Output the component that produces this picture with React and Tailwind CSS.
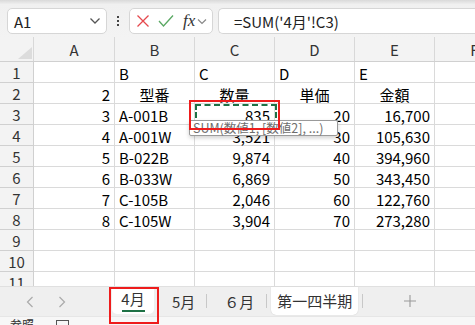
import React from "react";

const W = [81, 80, 80, 80, 80, 80];

const data = [
  [["", "l"], ["B", "l"], ["C", "l"], ["D", "l"], ["E", "l"], ["", "l"]],
  [["2", "r"], ["型番", "c"], ["数量", "c"], ["単価", "c"], ["金額", "c"], ["", "l"]],
  [["3", "r"], ["A-001B", "l"], ["835", "r"], ["20", "r"], ["16,700", "r"], ["", "l"]],
  [["4", "r"], ["A-001W", "l"], ["3,521", "r"], ["30", "r"], ["105,630", "r"], ["", "l"]],
  [["5", "r"], ["B-022B", "l"], ["9,874", "r"], ["40", "r"], ["394,960", "r"], ["", "l"]],
  [["6", "r"], ["B-033W", "l"], ["6,869", "r"], ["50", "r"], ["343,450", "r"], ["", "l"]],
  [["7", "r"], ["C-105B", "l"], ["2,046", "r"], ["60", "r"], ["122,760", "r"], ["", "l"]],
  [["8", "r"], ["C-105W", "l"], ["3,904", "r"], ["70", "r"], ["273,280", "r"], ["", "l"]],
  [["", "l"], ["", "l"], ["", "l"], ["", "l"], ["", "l"], ["", "l"]],
  [["", "l"], ["", "l"], ["", "l"], ["", "l"], ["", "l"], ["", "l"]],
  [["", "l"], ["", "l"], ["", "l"], ["", "l"], ["", "l"], ["", "l"]],
];

const alignCls = { l: "justify-start", r: "justify-end", c: "justify-center" };

function Chevron({ className }) {
  return (
    <svg width="12" height="8" viewBox="0 0 12 8" className={className}>
      <path d="M1.5 1.5 L6 6 L10.5 1.5" fill="none" stroke="#555" strokeWidth="1.3" />
    </svg>
  );
}

export default function App() {
  return (
    <div className="relative w-[475px] h-[325px] overflow-hidden bg-[#f3f3f3] text-black font-['Noto_Sans_CJK_JP','Noto_Sans',sans-serif]">
      {/* formula bar */}
      <div className="relative h-[37px] flex items-start pt-[8px] pl-[7px] gap-0 bg-gradient-to-b from-[#d9d9d9] via-[#f0f0f0] via-[12%] to-[#f3f3f3]">
        <div className="w-[100px] h-[26px] bg-white border border-[#d6d6d6] rounded-[5px] flex items-center pl-[6px] pr-[5px] justify-between">
          <span className="text-[15px] leading-none text-[#222]">A1</span>
          <Chevron />
        </div>
        <div className="w-[22px] h-[26px] flex flex-col items-center justify-center gap-[2px]">
          <span className="w-[2px] h-[2px] bg-[#444]" />
          <span className="w-[2px] h-[2px] bg-[#444]" />
          <span className="w-[2px] h-[2px] bg-[#444]" />
        </div>
        <div className="w-[84px] h-[26px] bg-white border border-[#d6d6d6] rounded-[5px] flex items-center pl-[6px]">
          <svg width="14" height="14" viewBox="0 0 14 14">
            <path d="M1.5 1.5 L12.5 12.5 M12.5 1.5 L1.5 12.5" stroke="#e5484d" strokeWidth="1.3" fill="none" />
          </svg>
          <svg width="16" height="14" viewBox="0 0 16 14" className="ml-[8px]">
            <path d="M1 7 L5.5 12 L15 1.5" stroke="#5aa863" strokeWidth="1.3" fill="none" />
          </svg>
          <span className="ml-[9px] text-[17px] leading-none italic font-['Liberation_Serif',serif] text-[#333] -mt-[2px]">fx</span>
          <svg width="10" height="7" viewBox="0 0 10 7" className="ml-[2px]">
            <path d="M1 1.5 L5 5.5 L9 1.5" fill="none" stroke="#888" strokeWidth="1.2" />
          </svg>
        </div>
        <div className="ml-[5px] flex-1 h-[26px] bg-white border border-[#d6d6d6] border-r-0 rounded-l-[5px] flex items-center pl-[15px]">
          <span className="text-[15px] leading-none text-[#222]">=SUM('4月'!C3)</span>
        </div>
      </div>

      {/* grid */}
      <div className="h-[249px] overflow-hidden bg-white">
        <div className="flex h-[25px] bg-[#f3f3f3] border-b border-[#d0d0d0]">
          <div className="w-[34px] shrink-0 relative border-r border-[#d8d8d8]">
            <svg width="14" height="12" viewBox="0 0 14 12" className="absolute left-[18px] top-[10px]">
              <path d="M14 0 L14 12 L0 12 Z" fill="#dcdcdc" />
            </svg>
          </div>
          {["A", "B", "C", "D", "E", "F"].map((c, i) => (
            <div
              key={c}
              style={{ width: W[i] }}
              className="shrink-0 flex items-center justify-center border-r border-[#d8d8d8] text-[15px] text-[#333] pt-[2px]"
            >
              {c}
            </div>
          ))}
        </div>
        {data.map((row, r) => (
          <div key={r} className="flex h-[21px]">
            <div className="w-[34px] shrink-0 bg-[#f3f3f3] border-r border-b border-[#d0d0d0] flex items-center justify-center text-[15px] text-[#333] leading-none pt-[1px]">
              {r + 1}
            </div>
            {row.map(([t, a], i) => (
              <div
                key={i}
                style={{ width: W[i] }}
                className={`shrink-0 flex items-center ${alignCls[a]} px-[4px] border-r border-b border-[#dadada] text-[15px] leading-none pt-[2px] whitespace-nowrap`}
              >
                {t}
              </div>
            ))}
          </div>
        ))}
      </div>

      {/* sheet tabs */}
      <div className="relative h-[30px] bg-[#efefef] border-t border-[#e0e0e0] flex items-start text-[15px] text-[#333]">
        <svg width="8" height="12" viewBox="0 0 8 12" className="absolute left-[26px] top-[9px]">
          <path d="M6.5 1 L1.5 6 L6.5 11" fill="none" stroke="#aaa" strokeWidth="1.2" />
        </svg>
        <svg width="8" height="12" viewBox="0 0 8 12" className="absolute left-[58px] top-[9px]">
          <path d="M1.5 1 L6.5 6 L1.5 11" fill="none" stroke="#aaa" strokeWidth="1.2" />
        </svg>
        <div className="ml-[112px] w-[42px] h-[27px] bg-white rounded-b-[5px] flex flex-col items-center pt-[3px]">
          <span className="leading-[18px]">4月</span>
          <span className="mt-[2px] w-[23px] h-[2px] bg-[#1e7145]" />
        </div>
        <span className="ml-[18px] mt-[6px] leading-[18px]">5月</span>
        <span className="ml-[11px] mt-[7px] w-px h-[14px] bg-[#c8c8c8]" />
        <span className="ml-[17px] mt-[6px] leading-[18px]">６月</span>
        <span className="ml-[12px] mt-[7px] w-px h-[14px] bg-[#c8c8c8]" />
        <div className="ml-[4px] w-[87px] h-[28px] bg-white rounded-b-[5px] shadow-[0_0_1px_#bbb] flex items-center justify-center pb-[1px]">
          <span className="leading-[18px]">第一四半期</span>
        </div>
        <span className="ml-[4px] mt-[7px] w-px h-[14px] bg-[#c8c8c8]" />
        <svg width="12" height="12" viewBox="0 0 12 12" className="ml-[41px] mt-[8px]">
          <path d="M6 0 V12 M0 6 H12" stroke="#999" strokeWidth="1.1" />
        </svg>
      </div>

      {/* status bar */}
      <div className="h-[9px] bg-[#f7f7f7] border-t border-[#e6e6e6] flex items-start pl-[10px] overflow-hidden">
        <span className="text-[12px] leading-[12px] mt-[2px] text-[#333]">参照</span>
        <span className="ml-[22px] mt-[3px] w-[13px] h-[12px] border border-[#555]" />
      </div>

      {/* selection marching ants */}
      <div className="absolute left-[195px] top-[104px] w-[82px] h-[22px] border-2 border-dashed border-[#1e7145]" />

      {/* tooltip */}
      <div className="absolute left-[189px] top-[120px] w-[149px] h-[16px] bg-white border border-[#9a9a9a] rounded-[2px] shadow-[0_2px_4px_rgba(0,0,0,0.18)] flex items-center pl-[3px]">
        <span className="text-[12.5px] leading-none text-[#6e6e6e] whitespace-nowrap">SUM(数値1, [数値2], ...)</span>
      </div>

      {/* red annotations */}
      <div className="absolute left-[189px] top-[100px] w-[91px] h-[30px] border-2 border-[#ee1c1c]" />
      <div className="absolute left-[109px] top-[287px] w-[50px] h-[37px] border-2 border-[#ee1c1c]" />
    </div>
  );
}
